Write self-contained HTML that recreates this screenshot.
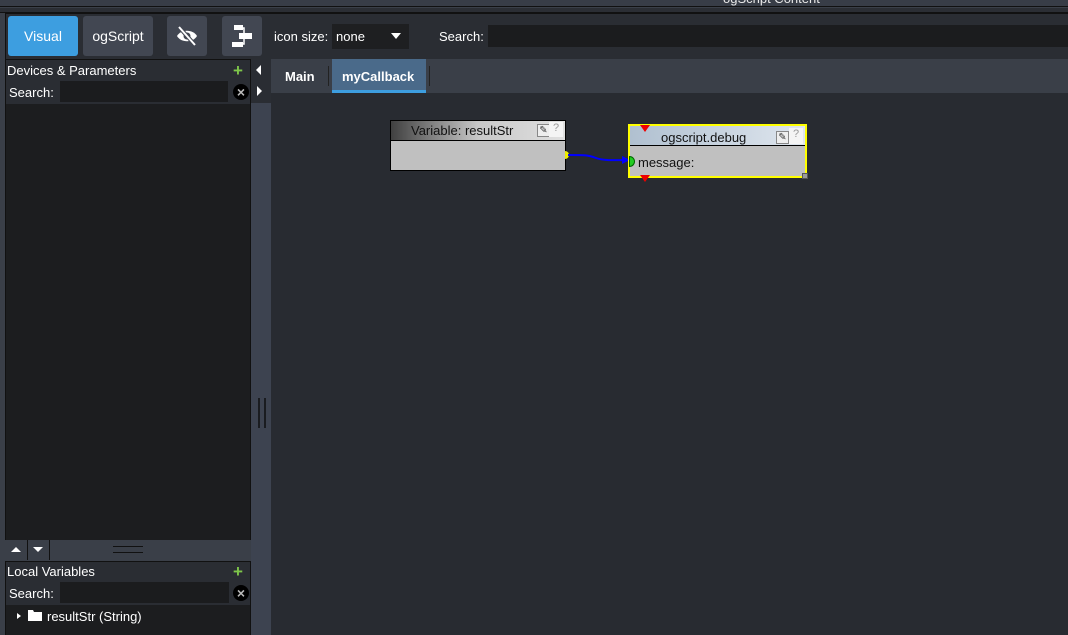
<!DOCTYPE html>
<html><head><style>
*{margin:0;padding:0;box-sizing:border-box}
body{width:1068px;height:635px;overflow:hidden;background:#3a3f48;font-family:"Liberation Sans",sans-serif;font-size:13px;color:#fff;position:relative}
.a{position:absolute}
.btn{position:absolute;top:16px;height:40px;border-radius:3px;background:#424752;display:flex;align-items:center;justify-content:center;font-size:14px;color:#fff}
.inp{position:absolute;background:#1b1c1e}
.xc{position:absolute;width:16px;height:16px;border-radius:50%;background:#000;color:#bbb;font-size:14px;line-height:16px;text-align:center;font-weight:bold}
</style></head><body>
<div class="a" style="left:0;top:0;width:1068px;height:7px;background:#383d47;border-bottom:1px solid #111"></div>
<div class="a" style="left:723px;top:-9px;font-size:13px;color:#e8e8e8">ogScript Content</div>
<div class="a" style="left:0;top:8px;width:1068px;height:5px;background:#2b2e34;border-bottom:1px solid #111"></div>
<div class="a" style="left:5px;top:13px;width:1063px;height:46px;background:#2a2d33;border-top:1px solid #111;border-left:1px solid #111"></div>
<div class="a" style="left:640px;top:25px;width:428px;height:22px;background:#1c1d1f"></div>
<div class="btn" style="left:8px;width:70px;background:#3d9ee0">Visual</div>
<div class="btn" style="left:83px;width:70px">ogScript</div>
<div class="btn" style="left:167px;width:40px"><svg width="24" height="20" viewBox="0 0 24 20"><path d="M2 10C6 3 18 3 22 10C18 17 6 17 2 10Z" fill="#fff"/><circle cx="12" cy="10" r="3.5" fill="#424752"/><path d="M4 1L20 19" stroke="#424752" stroke-width="4"/><path d="M4 1L20 19" stroke="#fff" stroke-width="2"/></svg></div>
<div class="btn" style="left:222px;width:40px"><svg width="22" height="26" viewBox="0 0 22 26"><rect x="3" y="2" width="9" height="5" fill="#fff"/><rect x="8" y="10" width="13" height="6" fill="#fff"/><rect x="1" y="19" width="11" height="5" fill="#fff"/><path d="M11 5H13V21H11" stroke="#fff" stroke-width="1.5" fill="none"/></svg></div>
<div class="a" style="left:274px;top:29px;font-size:13px">icon size:</div>
<div class="inp" style="left:332px;top:24px;width:77px;height:25px;background:#1e1f21"></div>
<div class="a" style="left:336px;top:29px;font-size:13px">none</div>
<div class="a" style="left:391px;top:33px;width:0;height:0;border-left:5px solid transparent;border-right:5px solid transparent;border-top:6px solid #fff"></div>
<div class="a" style="left:439px;top:29px;font-size:13px">Search:</div>
<div class="inp" style="left:488px;top:25px;width:580px;height:22px"></div>

<div class="a" style="left:5px;top:59px;width:246px;height:481px;background:#2a2d33;border:1px solid #111"></div>
<div class="a" style="left:7px;top:63px;font-size:13px">Devices &amp; Parameters</div>
<div class="a" style="left:233px;top:62px;color:#7ec64a;font-weight:bold;font-size:17px;line-height:17px">+</div>
<div class="a" style="left:9px;top:85px">Search:</div>
<div class="inp" style="left:60px;top:81px;width:168px;height:21px"></div>
<div class="xc" style="left:233px;top:84px">×</div>
<div class="a" style="left:6px;top:104px;width:244px;height:436px;background:#1c1d1f"></div>
<div class="a" style="left:5px;top:540px;width:246px;height:20px;background:#3a3f48"></div>
<div class="a" style="left:27px;top:540px;width:1px;height:20px;background:#111"></div>
<div class="a" style="left:49px;top:540px;width:1px;height:20px;background:#111"></div>
<div class="a" style="left:11px;top:547px;border-left:5px solid transparent;border-right:5px solid transparent;border-bottom:5px solid #fff"></div>
<div class="a" style="left:33px;top:547px;border-left:5px solid transparent;border-right:5px solid transparent;border-top:5px solid #fff"></div>
<div class="a" style="left:113px;top:546px;width:30px;height:1px;background:#111"></div>
<div class="a" style="left:113px;top:552px;width:30px;height:1px;background:#111"></div>
<div class="a" style="left:5px;top:561px;width:246px;height:74px;background:#2a2d33;border:1px solid #111"></div>
<div class="a" style="left:7px;top:564px">Local Variables</div>
<div class="a" style="left:233px;top:563px;color:#7ec64a;font-weight:bold;font-size:17px;line-height:17px">+</div>
<div class="a" style="left:9px;top:586px">Search:</div>
<div class="inp" style="left:60px;top:582px;width:169px;height:21px"></div>
<div class="xc" style="left:233px;top:585px">×</div>
<div class="a" style="left:6px;top:605px;width:244px;height:30px;background:#1c1d1f"></div>
<div class="a" style="left:17px;top:613px;border-top:3px solid transparent;border-bottom:3px solid transparent;border-left:4px solid #fff"></div>
<svg class="a" style="left:28px;top:609px" width="14" height="12"><path d="M0 1H5L6 3H14V12H0Z" fill="#fff"/></svg>
<div class="a" style="left:47px;top:609px">resultStr (String)</div>

<div class="a" style="left:251px;top:59px;width:20px;height:576px;background:#3d4350"></div>
<div class="a" style="left:251px;top:59px;width:20px;height:44px;background:#2a2d33"></div>
<div class="a" style="left:256px;top:65px;border-top:5px solid transparent;border-bottom:5px solid transparent;border-right:5px solid #fff"></div>
<div class="a" style="left:257px;top:86px;border-top:5px solid transparent;border-bottom:5px solid transparent;border-left:5px solid #fff"></div>
<div class="a" style="left:258px;top:398px;width:2px;height:30px;background:#1a1c20"></div>
<div class="a" style="left:264px;top:398px;width:2px;height:30px;background:#1a1c20"></div>

<div class="a" style="left:271px;top:59px;width:797px;height:34px;background:#3a3f48"></div>
<div class="a" style="left:285px;top:69px;font-weight:bold;font-size:13px">Main</div>
<div class="a" style="left:328px;top:66px;width:1px;height:20px;background:#222"></div>
<div class="a" style="left:332px;top:59px;width:94px;height:34px;background:#4a6a8a;border-bottom:3px solid #3d9ee0"></div>
<div class="a" style="left:342px;top:69px;font-weight:bold;font-size:13px">myCallback</div>
<div class="a" style="left:429px;top:66px;width:1px;height:20px;background:#222"></div>
<div class="a" style="left:271px;top:93px;width:797px;height:542px;background:#282b31"></div>

<div class="a" style="left:390px;top:120px;width:176px;height:51px;border:1px solid #000;background:#c0c0c0"></div>
<div class="a" style="left:391px;top:121px;width:174px;height:20px;background:linear-gradient(90deg,#404040,#c8c8c8 50%,#e0e0e0);border-bottom:1px solid #000"></div>
<div class="a" style="left:411px;top:123px;color:#111;font-size:13px">Variable: resultStr</div>
<div class="a" style="left:537px;top:124px;width:13px;height:13px;background:#eee;border:1px solid #888;font-size:10px;color:#333;line-height:11px;text-align:center">✎</div>
<div class="a" style="left:549px;top:122px;width:14px;height:15px;background:#f4f4f4;color:#999;font-size:11px;text-align:center">?</div>
<div class="a" style="left:565px;top:151px;width:4px;height:8px;background:#ee0;border-radius:0 4px 4px 0"></div>
<svg class="a" style="left:566px;top:150px" width="70" height="20"><path d="M2 5C20 5 22 5 30 8C38 11 50 10 62 10" stroke="#0000ff" stroke-width="2" fill="none"/><path d="M56 6L64 10L56 14Z" fill="#0000ff"/></svg>

<div class="a" style="left:628px;top:124px;width:179px;height:54px;border:2px solid #ff0;background:#c0c0c0"></div>
<div class="a" style="left:630px;top:126px;width:175px;height:20px;background:linear-gradient(90deg,#b0c0d0,#dfe6ee);border-bottom:1px solid #000"></div>
<div class="a" style="left:661px;top:130px;color:#111;font-size:13px">ogscript.debug</div>
<div class="a" style="left:776px;top:131px;width:13px;height:13px;background:#eee;border:1px solid #888;font-size:10px;color:#333;line-height:11px;text-align:center">✎</div>
<div class="a" style="left:789px;top:128px;width:14px;height:16px;background:#f4f4f4;color:#999;font-size:11px;text-align:center">?</div>
<div class="a" style="left:638px;top:155px;color:#111;font-size:13px">message:</div>
<div class="a" style="left:629px;top:156px;width:6px;height:11px;background:#2c2;border:1px solid #060;border-radius:0 6px 6px 0"></div>
<div class="a" style="left:640px;top:125px;border-left:5px solid transparent;border-right:5px solid transparent;border-top:7px solid #e00"></div>
<div class="a" style="left:640px;top:175px;border-left:5px solid transparent;border-right:5px solid transparent;border-top:7px solid #e00"></div>
<div class="a" style="left:802px;top:173px;width:6px;height:6px;background:#999;border:1px solid #555"></div>
</body></html>
